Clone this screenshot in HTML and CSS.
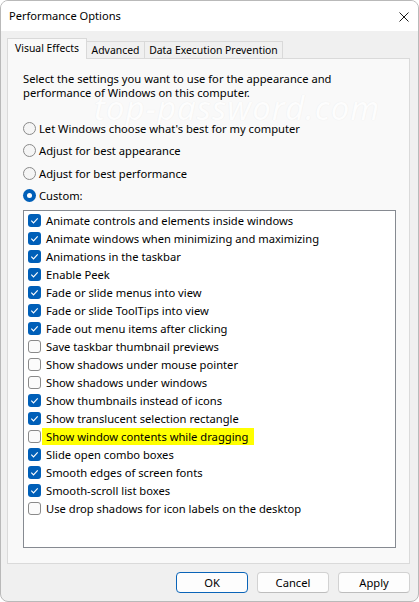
FILE: index.html
```html
<!DOCTYPE html>
<html>
<head>
<meta charset="utf-8">
<link rel="stylesheet" href="styles.css">
</head>
<body>
<div class="window">
  <div class="titlebar">
    <span class="title">Performance Options</span>
    <svg class="close" width="10" height="10" viewBox="0 0 10 10"><path d="M0.5 0.5 L9.5 9.5 M9.5 0.5 L0.5 9.5" stroke="#1a1a1a" stroke-width="1" fill="none"/></svg>
  </div>
  <div class="content">
    <div class="tabs">
      <div class="tab active">Visual Effects</div>
      <div class="tab tab-adv">Advanced</div>
      <div class="tab tab-dep">Data Execution Prevention</div>
    </div>
    <div class="panel">
      <div class="watermark">top-password.com</div>
      <p class="intro">Select the settings you want to use for the appearance and<br>performance of Windows on this computer.</p>
      <div class="radios">
        <div class="radio-row"><span class="radio"></span><span>Let Windows choose what's best for my computer</span></div>
        <div class="radio-row"><span class="radio"></span><span>Adjust for best appearance</span></div>
        <div class="radio-row"><span class="radio"></span><span>Adjust for best performance</span></div>
        <div class="radio-row"><span class="radio on"></span><span>Custom:</span></div>
      </div>
      <div class="listbox">
        <div class="item"><span class="cb on"><svg width="13" height="13" viewBox="0 0 13 13"><path d="M3.3 6.7 L5.5 8.9 L9.7 4.3" stroke="#fff" stroke-width="1.1" fill="none"/></svg></span><span class="lbl">Animate controls and elements inside windows</span></div>
        <div class="item"><span class="cb on"><svg width="13" height="13" viewBox="0 0 13 13"><path d="M3.3 6.7 L5.5 8.9 L9.7 4.3" stroke="#fff" stroke-width="1.1" fill="none"/></svg></span><span class="lbl">Animate windows when minimizing and maximizing</span></div>
        <div class="item"><span class="cb on"><svg width="13" height="13" viewBox="0 0 13 13"><path d="M3.3 6.7 L5.5 8.9 L9.7 4.3" stroke="#fff" stroke-width="1.1" fill="none"/></svg></span><span class="lbl">Animations in the taskbar</span></div>
        <div class="item"><span class="cb on"><svg width="13" height="13" viewBox="0 0 13 13"><path d="M3.3 6.7 L5.5 8.9 L9.7 4.3" stroke="#fff" stroke-width="1.1" fill="none"/></svg></span><span class="lbl">Enable Peek</span></div>
        <div class="item"><span class="cb on"><svg width="13" height="13" viewBox="0 0 13 13"><path d="M3.3 6.7 L5.5 8.9 L9.7 4.3" stroke="#fff" stroke-width="1.1" fill="none"/></svg></span><span class="lbl">Fade or slide menus into view</span></div>
        <div class="item"><span class="cb on"><svg width="13" height="13" viewBox="0 0 13 13"><path d="M3.3 6.7 L5.5 8.9 L9.7 4.3" stroke="#fff" stroke-width="1.1" fill="none"/></svg></span><span class="lbl">Fade or slide ToolTips into view</span></div>
        <div class="item"><span class="cb on"><svg width="13" height="13" viewBox="0 0 13 13"><path d="M3.3 6.7 L5.5 8.9 L9.7 4.3" stroke="#fff" stroke-width="1.1" fill="none"/></svg></span><span class="lbl">Fade out menu items after clicking</span></div>
        <div class="item"><span class="cb"></span><span class="lbl">Save taskbar thumbnail previews</span></div>
        <div class="item"><span class="cb"></span><span class="lbl">Show shadows under mouse pointer</span></div>
        <div class="item"><span class="cb"></span><span class="lbl">Show shadows under windows</span></div>
        <div class="item"><span class="cb on"><svg width="13" height="13" viewBox="0 0 13 13"><path d="M3.3 6.7 L5.5 8.9 L9.7 4.3" stroke="#fff" stroke-width="1.1" fill="none"/></svg></span><span class="lbl">Show thumbnails instead of icons</span></div>
        <div class="item"><span class="cb on"><svg width="13" height="13" viewBox="0 0 13 13"><path d="M3.3 6.7 L5.5 8.9 L9.7 4.3" stroke="#fff" stroke-width="1.1" fill="none"/></svg></span><span class="lbl">Show translucent selection rectangle</span></div>
        <div class="item"><span class="cb"></span><span class="lbl hl">Show window contents while dragging</span></div>
        <div class="item"><span class="cb on"><svg width="13" height="13" viewBox="0 0 13 13"><path d="M3.3 6.7 L5.5 8.9 L9.7 4.3" stroke="#fff" stroke-width="1.1" fill="none"/></svg></span><span class="lbl">Slide open combo boxes</span></div>
        <div class="item"><span class="cb on"><svg width="13" height="13" viewBox="0 0 13 13"><path d="M3.3 6.7 L5.5 8.9 L9.7 4.3" stroke="#fff" stroke-width="1.1" fill="none"/></svg></span><span class="lbl">Smooth edges of screen fonts</span></div>
        <div class="item"><span class="cb on"><svg width="13" height="13" viewBox="0 0 13 13"><path d="M3.3 6.7 L5.5 8.9 L9.7 4.3" stroke="#fff" stroke-width="1.1" fill="none"/></svg></span><span class="lbl">Smooth-scroll list boxes</span></div>
        <div class="item"><span class="cb"></span><span class="lbl">Use drop shadows for icon labels on the desktop</span></div>
      </div>
    </div>
    <div class="buttons">
      <div class="btn default">OK</div>
      <div class="btn">Cancel</div>
      <div class="btn">Apply</div>
    </div>
  </div>
</div>
</body>
</html>
```

FILE: styles.css
```css
* { box-sizing: border-box; }
html, body { margin: 0; padding: 0; background: #ffffff; }
body {
  font-family: "Noto Sans", "Open Sans", sans-serif;
  font-size: 11.2px;
  color: #000;
}
.window {
  width: 419px;
  height: 602px;
  border: 1px solid #b9b9b9;
  border-radius: 8px;
  overflow: hidden;
  display: flex;
  flex-direction: column;
  background: #f0f0f0;
}
.titlebar {
  height: 30px;
  background: #ffffff;
  display: flex;
  align-items: center;
  justify-content: space-between;
  padding: 0 9px 0 8px;
  flex: none;
}
.title { font-size: 11.1px; line-height: 16px; }
.close { display: block; margin-top: 1px; }
.content {
  flex: 1;
  padding: 7px 8px 0 6px;
  display: flex;
  flex-direction: column;
}
.tabs {
  display: flex;
  align-items: flex-start;
  height: 21px;
  margin-bottom: -1px;
  position: relative;
  z-index: 1;
  font-size: 10.4px;
}
.tab {
  display: flex;
  justify-content: center;
  border: 1px solid #d9d9d9;
  border-bottom: none;
  white-space: nowrap;
}
.tab.active {
  width: 80px;
  height: 21px;
  background: #f9f9f9;
  line-height: 17px;
  padding-top: 1px;
}
.tab-adv, .tab-dep {
  margin-top: 3px;
  height: 17px;
  line-height: 16px;
  margin-left: -1px;
  background: #f0f0f0;
}
.tab-adv { width: 59px; }
.tab-dep { width: 139px; }
.panel {
  position: relative;
  height: 506px;
  border: 1px solid #dadada;
  background: #f9f9f9;
  padding: 13px 13px 0 15px;
}
.watermark {
  position: absolute;
  left: 86px;
  top: 26px;
  font-size: 33px;
  font-style: italic;
  letter-spacing: 1px;
  color: #fdfdfd;
  text-shadow: 0 0 1px #e8e8e8;
  font-family: "Noto Sans", sans-serif;
  white-space: nowrap;
}
.intro {
  position: relative;
  margin: 0;
  line-height: 14px;
}
.radios {
  position: relative;
  margin-top: 17px;
}
.radio-row {
  display: flex;
  align-items: center;
  gap: 3px;
  height: 22.5px;
}
.radio {
  width: 13px;
  height: 13px;
  border-radius: 50%;
  border: 1px solid #8a8a8a;
  background: #f5f5f5;
  flex: none;
}
.radio.on {
  border: none;
  background: #005fb8;
  display: flex;
  align-items: center;
  justify-content: center;
}
.radio.on::after {
  content: "";
  width: 5px;
  height: 5px;
  border-radius: 50%;
  background: #fff;
}
.listbox {
  position: relative;
  margin-top: 3px;
  width: 373px;
  height: 338px;
  border: 1px solid #868a91;
  background: #fff;
  padding: 0 0 0 4px;
}
.item {
  display: flex;
  align-items: center;
  height: 18px;
}
.cb {
  width: 13px;
  height: 13px;
  border-radius: 3px;
  border: 1px solid #8a8a8a;
  background: #fbfbfb;
  flex: none;
}
.cb.on {
  border: none;
  background: #005fb8;
}
.cb svg { display: block; }
.lbl {
  margin-left: 1px;
  padding: 0 4px;
  height: 17px;
  line-height: 17px;
  white-space: nowrap;
}
.lbl.hl { background: #ffff00; padding-right: 6px; }
.buttons {
  display: flex;
  justify-content: flex-end;
  gap: 9px;
  margin-top: 8px;
}
.btn {
  width: 72px;
  height: 21px;
  border: 1px solid #d2d2d2;
  border-bottom-color: #bdbdbd;
  border-radius: 4px;
  background: #fdfdfd;
  text-align: center;
  line-height: 19px;
}
.btn.default {
  border: 1px solid #0a64b8;
}
```
